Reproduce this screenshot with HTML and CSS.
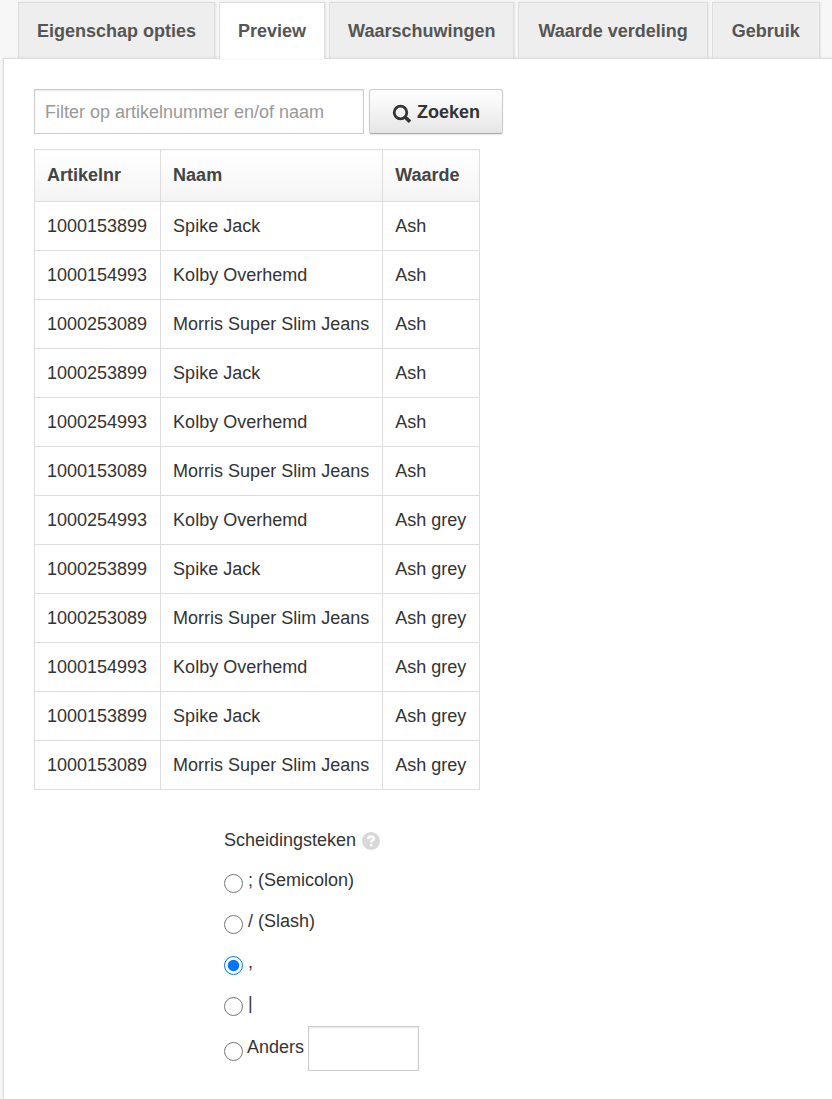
FILE: index.html
```html
<!DOCTYPE html>
<html lang="nl">

<head>
    <meta charset="UTF-8">
    <meta name="viewport" content="width=device-width, initial-scale=1.0">
    <title>Eigenschap preview</title>
    <link rel="stylesheet" href="styles.css">
</head>

<body>
    <!-- Tabs -->
    <nav class="tabs">
        <a class="tab" href="#opties">Eigenschap opties</a>
        <a class="tab active" href="#preview">Preview</a>
        <a class="tab" href="#waarschuwingen">Waarschuwingen</a>
        <a class="tab tab-wide" href="#verdeling">Waarde verdeling</a>
        <a class="tab tab-wide" href="#gebruik">Gebruik</a>
    </nav>

    <main class="panel" id="preview">
        <!-- Filter -->
        <form class="filter">
            <input class="text-input filter-input" type="text" placeholder="Filter op artikelnummer en/of naam" aria-label="Filter op artikelnummer en/of naam">
            <button class="button" type="button">
                <svg class="search-icon" viewBox="0 0 20 20" width="20" height="20" aria-hidden="true">
                    <circle cx="8.5" cy="8.5" r="6.3" fill="none" stroke="#333" stroke-width="2.8"/>
                    <path d="M13 13l5 4.800" fill="none" stroke="#333" stroke-width="3.600"/>
                </svg>
                Zoeken
            </button>
        </form>

        <!-- Articles -->
        <table class="articles">
            <thead>
                <tr><th>Artikelnr</th><th>Naam</th><th>Waarde</th></tr>
            </thead>
            <tbody>
                <tr><td>1000153899</td><td>Spike Jack</td><td>Ash</td></tr>
                <tr><td>1000154993</td><td>Kolby Overhemd</td><td>Ash</td></tr>
                <tr><td>1000253089</td><td>Morris Super Slim Jeans</td><td>Ash</td></tr>
                <tr><td>1000253899</td><td>Spike Jack</td><td>Ash</td></tr>
                <tr><td>1000254993</td><td>Kolby Overhemd</td><td>Ash</td></tr>
                <tr><td>1000153089</td><td>Morris Super Slim Jeans</td><td>Ash</td></tr>
                <tr><td>1000254993</td><td>Kolby Overhemd</td><td>Ash grey</td></tr>
                <tr><td>1000253899</td><td>Spike Jack</td><td>Ash grey</td></tr>
                <tr><td>1000253089</td><td>Morris Super Slim Jeans</td><td>Ash grey</td></tr>
                <tr><td>1000154993</td><td>Kolby Overhemd</td><td>Ash grey</td></tr>
                <tr><td>1000153899</td><td>Spike Jack</td><td>Ash grey</td></tr>
                <tr><td>1000153089</td><td>Morris Super Slim Jeans</td><td>Ash grey</td></tr>
            </tbody>
        </table>

        <!-- Separator options -->
        <fieldset class="separator">
            <legend class="separator-title">
                Scheidingsteken
                <svg class="help-icon" viewBox="0 0 18 18" width="18" height="18" aria-hidden="true">
                    <circle cx="9" cy="9" r="9" fill="#d8d8d8"/>
                    <path d="M6.200 7.200c0-3.600 5.600-3.400 5.600-.5 0 1.800-2.600 1.700-2.600 3.700" fill="none" stroke="#fff" stroke-width="2.600"/>
                    <circle cx="9.200" cy="13" r="1.500" fill="#fff"/>
                </svg>
            </legend>
            <div class="option">
                <input type="radio" name="separator" id="sep-semicolon">
                <label for="sep-semicolon">; (Semicolon)</label>
            </div>
            <div class="option">
                <input type="radio" name="separator" id="sep-slash">
                <label for="sep-slash">/ (Slash)</label>
            </div>
            <div class="option">
                <input type="radio" name="separator" id="sep-comma" checked>
                <label for="sep-comma">,</label>
            </div>
            <div class="option">
                <input type="radio" name="separator" id="sep-pipe">
                <label for="sep-pipe">|</label>
            </div>
            <div class="option option-other">
                <input type="radio" name="separator" id="sep-other">
                <label for="sep-other">Anders</label>
                <input class="text-input other-input" type="text" aria-label="Ander scheidingsteken">
            </div>
        </fieldset>
    </main>
</body>

</html>
```
FILE: styles.css
```css
* {
    box-sizing: border-box;
}

body {
    display: flex;
    flex-direction: column;
    min-height: 100vh;
    margin: 0;
    padding-top: 2px;
    background-color: #f7f7f7;
    color: #333;
    font-family: "Liberation Sans", Arial, sans-serif;
    font-size: 18px;
    line-height: 24px;
}

/* Tabs */
.tabs {
    display: flex;
    gap: 4px;
    padding-left: 18px;
}

.tab {
    padding: 16px 18px 15px;
    background-color: #eee;
    border: 1px solid #ddd;
    border-bottom: 0;
    box-shadow: 1px 0 2px rgba(0, 0, 0, 0.08);
    color: #555;
    font-weight: bold;
    text-decoration: none;
    white-space: nowrap;
}

.tab-wide {
    padding-left: 19px;
    padding-right: 19px;
}

.tab.active {
    position: relative;
    z-index: 1;
    margin-bottom: -1px;
    background-color: #fff;
}

/* Panel */
.panel {
    flex: 1;
    margin-left: 3px;
    padding: 30px 30px 28px;
    background-color: #fff;
    border: 1px solid #ddd;
    border-width: 1px 0 0 1px;
    box-shadow: 0 0 3px rgba(0, 0, 0, 0.08);
}

/* Filter */
.filter {
    display: flex;
    gap: 5px;
    margin-bottom: 15px;
}

.text-input {
    height: 45px;
    padding: 1px 10px 0;
    background-color: #fff;
    border: 1px solid #ccc;
    box-shadow: inset 0 1px 2px rgba(0, 0, 0, 0.1);
    color: #333;
    font: inherit;
}

.text-input::placeholder {
    color: #999;
}

.filter-input {
    width: 330px;
}

.button {
    display: flex;
    align-items: center;
    gap: 5px;
    height: 45px;
    padding: 0 22px;
    background: linear-gradient(#fff, #e6e6e6);
    border: 1px solid #ccc;
    border-bottom-color: #aaa;
    border-radius: 3px;
    box-shadow: 0 1px 2px rgba(0, 0, 0, 0.1);
    color: #333;
    font: inherit;
    font-weight: bold;
    cursor: pointer;
}

.search-icon {
    margin-top: 4px;
}

/* Articles */
.articles {
    border-collapse: collapse;
}

.articles th,
.articles td {
    padding: 12px 13px 12px 12px;
    border: 1px solid #ddd;
    text-align: left;
}

.articles th {
    padding-top: 13px;
    padding-bottom: 14px;
    background: linear-gradient(#fff, #f4f4f4);
    color: #444;
}

/* Separator options */
.separator {
    margin: 38px 0 0 190px;
    padding: 0;
    border: 0;
}

.separator-title {
    display: flex;
    align-items: center;
    gap: 6px;
    padding: 0;
    margin-bottom: 16px;
}

.help-icon {
    margin-top: 2px;
}

.option {
    display: flex;
    align-items: flex-start;
    gap: 5px;
    height: 41px;
}

.option input[type="radio"] {
    width: 19px;
    height: 19px;
    margin: 6px 0 0;
    accent-color: #0075ff;
}

.option-other {
    align-items: center;
    gap: 4px;
    height: 45px;
    margin-top: -6px;
}

.option-other label {
    margin-bottom: 4px;
}

.other-input {
    width: 111px;
}
```
